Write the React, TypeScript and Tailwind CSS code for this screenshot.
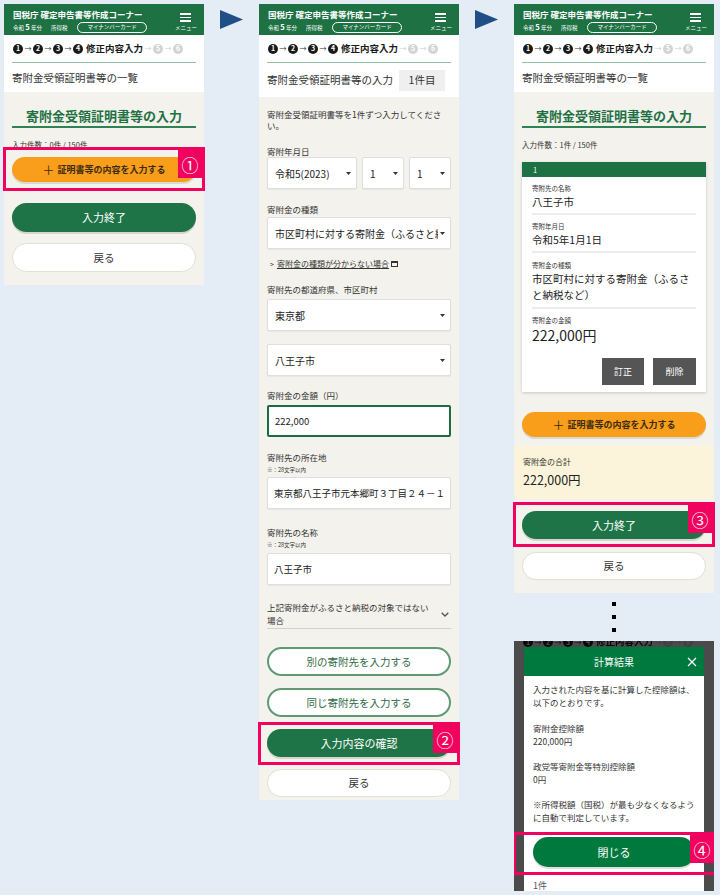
import React from "react";

function Circle({ n, dim }: { n: number; dim?: boolean }) {
  return (
    <span
      className={`inline-flex h-[10px] w-[10px] shrink-0 items-center justify-center rounded-full text-[7px] font-bold leading-none text-white ${
        dim ? "bg-[#d4d4d4]" : "bg-[#1a1a1a]"
      }`}
    >
      {n}
    </span>
  );
}

function Arr({ dim }: { dim?: boolean }) {
  return (
    <span className={`mx-[1.5px] text-[7px] leading-none ${dim ? "text-[#cfcfcf]" : "text-[#333]"}`}>→</span>
  );
}

function Steps({ line = true }: { line?: boolean }) {
  return (
    <div
      className={`flex h-[28px] items-center pl-[1px] text-[#1a1a1a] ${line ? "border-b border-[#93c1a1]" : ""}`}
    >
      <Circle n={1} />
      <Arr />
      <Circle n={2} />
      <Arr />
      <Circle n={3} />
      <Arr />
      <Circle n={4} />
      <span className="ml-[3px] text-[9.5px] font-bold leading-none">修正内容入力</span>
      <Arr dim />
      <Circle n={5} dim />
      <Arr dim />
      <Circle n={6} dim />
    </div>
  );
}

function Header() {
  return (
    <div className="flex h-[31px] justify-between bg-[#1e7143] pl-[9px] pr-[7px] text-white">
      <div className="pt-[5px]">
        <div className="text-[8.5px] font-bold leading-[10px]">国税庁 確定申告書等作成コーナー</div>
        <div className="mt-[3px] flex items-center text-[5.5px] leading-[10px]">
          <span>
            令和 <b className="text-[7.5px]">5</b> 年分
          </span>
          <span className="ml-[9px]">所得税</span>
          <span className="ml-[10px] rounded-full border border-white px-[9px] leading-[9px]">マイナンバーカード</span>
        </div>
      </div>
      <div className="flex flex-col items-center pt-[9px]">
        <div className="flex w-[11px] flex-col gap-[2px]">
          <span className="h-[1.5px] bg-white" />
          <span className="h-[1.5px] bg-white" />
          <span className="h-[1.5px] bg-white" />
        </div>
        <span className="mt-[4px] text-[5.5px] leading-none">メニュー</span>
      </div>
    </div>
  );
}

function Tri() {
  return (
    <svg width="5" height="3" viewBox="0 0 5 3" className="shrink-0">
      <polygon points="0,0 5,0 2.5,3" fill="#333" />
    </svg>
  );
}

function Select({ value, className = "" }: { value: string; className?: string }) {
  return (
    <div
      className={`flex h-[32px] items-center gap-[2px] rounded-[2px] border border-[#dedede] bg-white pl-[7px] pr-[5px] text-[10px] text-[#222] shadow-[0_1px_1px_rgba(0,0,0,0.05)] ${className}`}
    >
      <span className="min-w-0 flex-1 overflow-hidden whitespace-nowrap">{value}</span>
      <Tri />
    </div>
  );
}

function Input({ value, active }: { value: string; active?: boolean }) {
  return (
    <div
      className={`flex h-[32px] items-center overflow-hidden whitespace-nowrap rounded-[2px] bg-white pl-[6px] text-[9.5px] text-[#222] ${
        active ? "border-2 border-[#1e6b3e]" : "border border-[#dedede] shadow-[0_1px_1px_rgba(0,0,0,0.05)]"
      }`}
    >
      {value}
    </div>
  );
}

function Label({ children, className = "" }: { children: React.ReactNode; className?: string }) {
  return <div className={`text-[8.5px] leading-[10px] text-[#333] ${className}`}>{children}</div>;
}

function Mark({ n, box, children }: { n: string; box: string; children: React.ReactNode }) {
  return (
    <div className="relative">
      {children}
      <div className={`pointer-events-none absolute border-[3px] border-[#f0025e] ${box}`}>
        <span className="absolute right-0 top-0 flex h-[28px] w-[24px] items-center justify-center bg-[#f0025e] text-[17px] leading-none text-white">
          {n}
        </span>
      </div>
    </div>
  );
}

function GreenBtn({ label, h = "h-[29px]", color = "bg-[#1e7446]" }: { label: string; h?: string; color?: string }) {
  return (
    <div
      className={`flex ${h} items-center justify-center rounded-full ${color} text-[11px] text-white shadow-[0_2px_0_rgba(0,0,0,0.12)]`}
    >
      {label}
    </div>
  );
}

function BackBtn({ h = "h-[29px]" }: { h?: string }) {
  return (
    <div className={`flex ${h} items-center justify-center rounded-full border border-[#e2dfd3] bg-white text-[10.5px] text-[#333]`}>
      戻る
    </div>
  );
}

function OrangeBtn() {
  return (
    <div className="flex h-[25px] items-center justify-center rounded-full bg-[#f89e1b] text-[9px] font-bold text-[#3b2a10] shadow-[0_2px_0_rgba(0,0,0,0.1)]">
      <span className="mr-[3px] text-[12px] font-normal leading-none">＋</span>証明書等の内容を入力する
    </div>
  );
}

function OutlineBtn({ label }: { label: string }) {
  return (
    <div className="flex h-[29px] items-center justify-center rounded-full border-2 border-[#5f9a74] bg-white text-[10.5px] text-[#2f6a46]">
      {label}
    </div>
  );
}

function Heading() {
  return (
    <div className="pt-[15px]">
      <h2 className="border-b-2 border-[#2f8353] pb-[1px] text-center text-[13px] font-bold leading-[18px] text-[#1e7143]">
        寄附金受領証明書等の入力
      </h2>
    </div>
  );
}

function Arrow() {
  return (
    <div className="w-[55px] shrink-0 pl-[16px] pt-[6px]">
      <svg width="23" height="19" viewBox="0 0 23 19">
        <polygon points="0,0 23,9.5 0,19" fill="#1f4f86" />
      </svg>
    </div>
  );
}

function PhoneTop({ title }: { title: React.ReactNode }) {
  return (
    <>
      <Header />
      <div className="bg-white px-[8px]">
        <Steps />
        {title}
      </div>
    </>
  );
}

function Phone1() {
  return (
    <div className="w-[200px] shrink-0">
      <PhoneTop
        title={
          <div className="flex h-[29px] items-center whitespace-nowrap text-[10.5px] text-[#333]">
            寄附金受領証明書等の一覧
          </div>
        }
      />
      <div className="bg-[#f3f2ed] px-[8px] pb-[13px]">
        <Heading />
        <div className="mt-[12px] text-[7.5px] leading-[10px] text-[#333]">入力件数：0件 / 150件</div>
        <div className="mt-[7px]">
          <Mark n="①" box="-left-[9px] -right-[9px] -top-[10px] -bottom-[9px]">
            <OrangeBtn />
          </Mark>
        </div>
        <div className="mt-[21px]">
          <GreenBtn label="入力終了" />
        </div>
        <div className="mt-[11px]">
          <BackBtn />
        </div>
      </div>
    </div>
  );
}

function Phone2() {
  return (
    <div className="w-[200px] shrink-0">
      <PhoneTop
        title={
          <div className="flex h-[34px] items-center justify-between whitespace-nowrap pr-[6px] text-[10.5px] text-[#333]">
            <span>寄附金受領証明書等の入力</span>
            <span className="flex h-[21px] w-[46px] items-center justify-center bg-[#efefef] text-[10.5px]">1件目</span>
          </div>
        }
      />
      <div className="bg-[#f3f2ed] px-[8px] pb-[3px] pt-[12px]">
        <div className="pr-[6px] text-[8.5px] leading-[11px] text-[#333]">
          寄附金受領証明書等を1件ずつ入力してください。
        </div>

        <Label className="mt-[15px]">寄附年月日</Label>
        <div className="mt-[1px] flex gap-[5px]">
          <Select value="令和5(2023)" className="w-[90px]" />
          <Select value="1" className="w-[42px]" />
          <Select value="1" className="w-[42px]" />
        </div>

        <Label className="mt-[15px]">寄附金の種類</Label>
        <Select value="市区町村に対する寄附金（ふるさと納税など）" className="mt-[3px]" />

        <div className="mt-[10px] flex items-center pl-[3px] text-[8px] leading-[10px] text-[#333]">
          <span className="mr-[3px] text-[7px]">&gt;</span>
          <span className="underline">寄附金の種類が分からない場合</span>
          <svg width="7" height="6" viewBox="0 0 7 6" className="ml-[2px]">
            <rect x="0.5" y="0.5" width="6" height="5" fill="none" stroke="#333" strokeWidth="1" />
            <rect x="0.5" y="0.5" width="6" height="1.5" fill="#333" />
          </svg>
        </div>

        <Label className="mt-[15px]">寄附先の都道府県、市区町村</Label>
        <Select value="東京都" className="mt-[5px]" />
        <Select value="八王子市" className="mt-[13px]" />

        <Label className="mt-[14px]">寄附金の金額（円）</Label>
        <div className="mt-[5px]">
          <Input value="222,000" active />
        </div>

        <Label className="mt-[15px]">寄附先の所在地</Label>
        <div className="mt-[4px] text-[5.5px] leading-[8px] text-[#333]">※：28文字以内</div>
        <div className="mt-[3px]">
          <Input value="東京都八王子市元本郷町３丁目２４－１" />
        </div>

        <Label className="mt-[18px]">寄附先の名称</Label>
        <div className="mt-[4px] text-[5.5px] leading-[8px] text-[#333]">※：28文字以内</div>
        <div className="mt-[4px]">
          <Input value="八王子市" />
        </div>

        <div className="mt-[16px] flex items-center justify-between border-b border-[#d0d0d0] pb-[1px]">
          <div className="w-[166px] text-[8.5px] leading-[13px] text-[#333]">
            上記寄附金がふるさと納税の対象ではない場合
          </div>
          <svg width="8" height="5" viewBox="0 0 8 5" className="mr-[2px]">
            <polyline points="0.7,0.7 4,4 7.3,0.7" fill="none" stroke="#555" strokeWidth="1.3" />
          </svg>
        </div>

        <div className="mt-[18px]">
          <OutlineBtn label="別の寄附先を入力する" />
        </div>
        <div className="mt-[12px]">
          <OutlineBtn label="同じ寄附先を入力する" />
        </div>
        <div className="mt-[12px]">
          <Mark n="②" box="-left-[9px] -right-[9px] -top-[7px] -bottom-[8px]">
            <GreenBtn label="入力内容の確認" h="h-[28px]" />
          </Mark>
        </div>
        <div className="mt-[12px]">
          <BackBtn h="h-[28px]" />
        </div>
      </div>
    </div>
  );
}

function Item({
  label,
  value,
  pt,
  valueClass = "text-[10.5px] leading-[15px]",
  last,
}: {
  label: string;
  value: React.ReactNode;
  pt: string;
  valueClass?: string;
  last?: boolean;
}) {
  return (
    <div className={`${pt} ${last ? "" : "border-b-2 border-[#ececec] pb-[4px]"}`}>
      <div className="mb-[1px] text-[6.5px] leading-[10px] text-[#333]">{label}</div>
      <div className={`${valueClass} text-[#222]`}>{value}</div>
    </div>
  );
}

function Phone3() {
  return (
    <div className="w-[200px] shrink-0">
      <PhoneTop
        title={
          <div className="flex h-[29px] items-center whitespace-nowrap text-[10.5px] text-[#333]">
            寄附金受領証明書等の一覧
          </div>
        }
      />
      <div className="bg-[#f3f2ed] px-[8px] pb-[13px]">
        <Heading />
        <div className="mt-[12px] text-[7.5px] leading-[10px] text-[#333]">入力件数：1件 / 150件</div>
        <div className="mt-[12px] bg-white pb-[7px] shadow-[0_1px_3px_rgba(0,0,0,0.18)]">
          <div className="flex h-[15px] items-center bg-[#1e7143] pl-[11px] text-[7.5px] text-white">1</div>
          <div className="px-[10px]">
            <Item label="寄附先の名称" value="八王子市" pt="pt-[6px]" />
            <Item label="寄附年月日" value="令和5年1月1日" pt="pt-[6px]" />
            <Item
              label="寄附金の種類"
              value="市区町村に対する寄附金（ふるさと納税など）"
              pt="pt-[7px]"
              valueClass="text-[10.5px] leading-[16px]"
            />
            <Item
              label="寄附金の金額"
              value="222,000円"
              pt="pt-[6px]"
              valueClass="text-[14px] leading-[18px]"
              last
            />
            <div className="mt-[14px] flex justify-end gap-[9px]">
              <span className="flex h-[27px] w-[42px] items-center justify-center bg-[#555] text-[9px] text-white">
                訂正
              </span>
              <span className="flex h-[27px] w-[43px] items-center justify-center bg-[#555] text-[9px] text-white">
                削除
              </span>
            </div>
          </div>
        </div>
        <div className="mt-[20px]">
          <OrangeBtn />
        </div>
        <div className="-mx-[8px] mt-[9px] h-[53px] bg-[#fcf4da] px-[9px] pt-[10px]">
          <div className="text-[8px] leading-[12px] text-[#333]">寄附金の合計</div>
          <div className="mt-[3px] text-[12.5px] leading-[18px] text-[#222]">222,000円</div>
        </div>
        <div className="mt-[12px]">
          <Mark n="③" box="-left-[9px] -right-[9px] -top-[9px] -bottom-[8px]">
            <GreenBtn label="入力終了" h="h-[28px]" />
          </Mark>
        </div>
        <div className="mt-[13px]">
          <BackBtn h="h-[28px]" />
        </div>
      </div>
    </div>
  );
}

function ResultShot() {
  return (
    <div className="mt-[9px] h-[250px] overflow-hidden bg-[#4b4b4b]">
      {/* page behind the modal, darkened */}
      <div className="h-[6px] overflow-hidden px-[8px] brightness-[0.3]">
        <div className="-mt-[13px]">
          <Steps line={false} />
        </div>
      </div>
      <div className="mx-[10px] bg-white">
        <div className="relative flex h-[29px] items-center justify-center bg-[#00793f] text-[10px] text-white">
          計算結果
          <svg width="10" height="10" viewBox="0 0 10 10" className="absolute right-[7px]">
            <path d="M1 1 L9 9 M9 1 L1 9" stroke="#fff" strokeWidth="1.2" />
          </svg>
        </div>
        <div className="px-[9px] pt-[7px] text-[8.5px] leading-[13px] text-[#333]">
          <div>入力された内容を基に計算した控除額は、以下のとおりです。</div>
          <div className="mt-[13px]">寄附金控除額</div>
          <div>220,000円</div>
          <div className="mt-[12px]">政党等寄附金等特別控除額</div>
          <div>0円</div>
          <div className="mt-[12px]">※所得税額（国税）が最も少なくなるように自動で判定しています。</div>
          <div className="mt-[13px]">
            <Mark n="④" box="-left-[20px] -right-[22px] -top-[5px] -bottom-[8px]">
              <GreenBtn label="閉じる" h="h-[30px]" color="bg-[#00793f]" />
            </Mark>
          </div>
          <div className="mt-[12px] text-[9px] text-[#555]">1件</div>
        </div>
      </div>
    </div>
  );
}

export default function App() {
  return (
    <div className="h-[895px] w-[720px] overflow-hidden bg-[#e4ecf6] font-['Noto_Sans_CJK_JP',sans-serif]">
      <div className="flex items-start pl-[4px] pt-[4px]">
        <Phone1 />
        <Arrow />
        <Phone2 />
        <Arrow />
        <div className="w-[200px] shrink-0">
          <Phone3 />
          <div className="mt-[9px] flex flex-col items-center gap-[9px]">
            <span className="h-[4px] w-[4px] bg-black" />
            <span className="h-[4px] w-[4px] bg-black" />
            <span className="h-[4px] w-[4px] bg-black" />
          </div>
          <ResultShot />
        </div>
      </div>
    </div>
  );
}
